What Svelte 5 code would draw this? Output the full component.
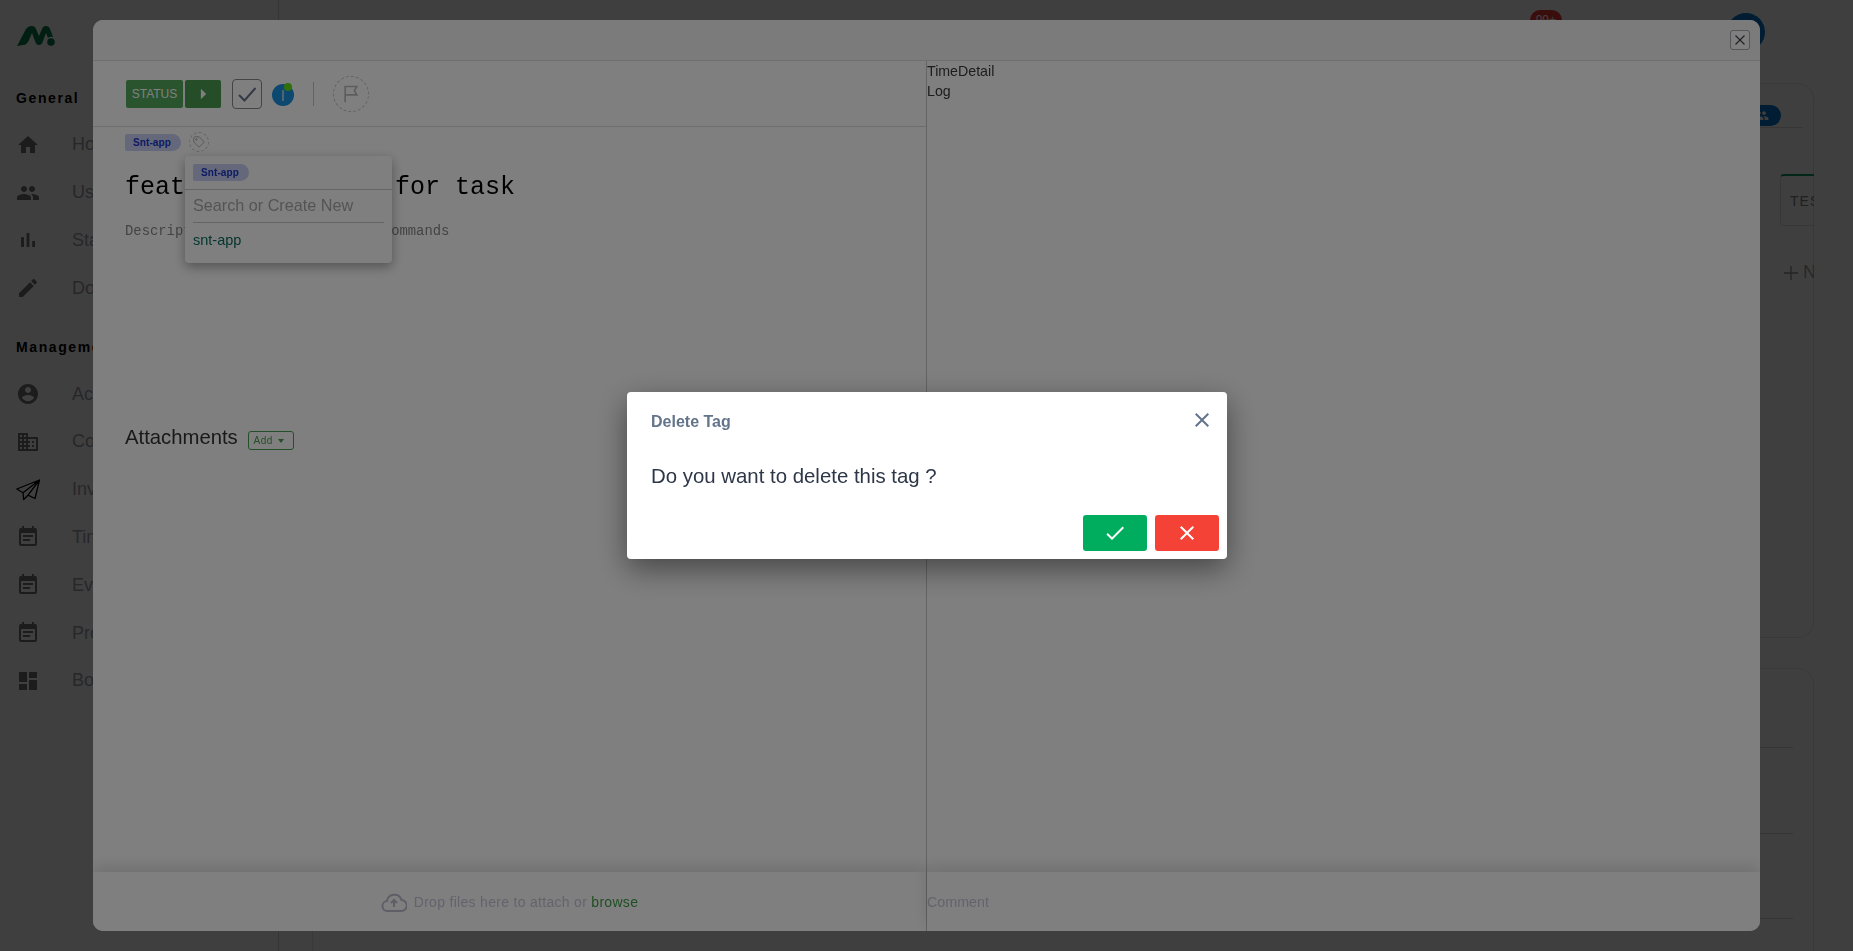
<script lang="ts">
	const general = [
		{ label: 'Home', d: 'M10 20v-6h4v6h5v-8h3L12 3 2 12h3v8z' },
		{ label: 'Users', d: 'M16 11c1.66 0 2.99-1.34 2.99-3S17.66 5 16 5c-1.66 0-3 1.34-3 3s1.34 3 3 3zm-8 0c1.66 0 2.99-1.34 2.99-3S9.66 5 8 5C6.34 5 5 6.34 5 8s1.34 3 3 3zm0 2c-2.33 0-7 1.17-7 3.5V19h14v-2.5c0-2.33-4.67-3.5-7-3.5zm8 0c-.29 0-.62.02-.97.05 1.16.84 1.97 1.97 1.97 3.45V19h6v-2.5c0-2.33-4.67-3.5-7-3.5z' },
		{ label: 'Stats', d: 'M5 9.2h3V19H5zM10.6 5h2.8v14h-2.8zm5.6 8H19v6h-2.8z' },
		{ label: 'Docs', d: 'M3 17.25V21h3.75L17.81 9.94l-3.75-3.75L3 17.25zM20.71 7.04c.39-.39.39-1.02 0-1.41l-2.34-2.34c-.39-.39-1.02-.39-1.41 0l-1.83 1.83 3.75 3.75 1.83-1.83z' }
	];
	const note = 'M17 10H7v2h10v-2zm2-7h-1V1h-2v2H8V1H6v2H5c-1.11 0-1.99.9-1.99 2L3 19c0 1.1.89 2 2 2h14c1.1 0 2-.9 2-2V5c0-1.1-.9-2-2-2zm0 16H5V8h14v11zm-5-5H7v2h7v-2z';
	const management = [
		{ label: 'Accounts', d: 'M12 2C6.48 2 2 6.48 2 12s4.48 10 10 10 10-4.48 10-10S17.52 2 12 2zm0 3c1.66 0 3 1.34 3 3s-1.34 3-3 3-3-1.34-3-3 1.34-3 3-3zm0 14.2c-2.5 0-4.71-1.28-6-3.22.03-1.99 4-3.08 6-3.08 1.99 0 5.97 1.09 6 3.08-1.29 1.94-3.5 3.22-6 3.22z' },
		{ label: 'Companies', d: 'M12 7V3H2v18h20V7H12zM6 19H4v-2h2v2zm0-4H4v-2h2v2zm0-4H4V9h2v2zm0-4H4V5h2v2zm4 12H8v-2h2v2zm0-4H8v-2h2v2zm0-4H8V9h2v2zm0-4H8V5h2v2zm10 12h-8v-2h2v-2h-2v-2h2v-2h-2V9h8v10zm-2-8h-2v2h2v-2zm0 4h-2v2h2v-2z' },
		{ label: 'Invoices', plane: true },
		{ label: 'Timesheets', d: note },
		{ label: 'Events', d: note },
		{ label: 'Projects', d: note },
		{ label: 'Boards', d: 'M3 13h8V3H3v10zm0 8h8v-6H3v6zm10 0h8V11h-8v10zm0-18v6h8V3h-8z' }
	];
	const peopleIcon = general[1].d;
</script>

{#snippet navItem(item)}
	<li>
		{#if item.plane}
			<svg class="nav-icon plane" viewBox="0 0 24 24" fill="none" stroke="#000" stroke-width="1.300" stroke-linejoin="round">
				<path d="M23.500 2 .8 11 7 14.800l.6 6.700 4.400-4.300 7 3.300zM23.500 2 7 14.800M23.500 2 12 17.200" />
			</svg>
		{:else}
			<svg class="nav-icon" viewBox="0 0 24 24"><path d={item.d} /></svg>
		{/if}
		<span>{item.label}</span>
	</li>
{/snippet}

<div class="page">
	<aside class="sidebar">
		<svg class="logo" viewBox="0 0 38 20">
			<path d="M0 20 9 3Q11 0 14 0h1q3 0 4 3l3 7 3-7q1-3 4-3t4 3l3 8q-3-1-5 1l-2-5-3 8q-1 4-4 4t-4-4l-3-8-3 7q-2 5-6 5z" fill="#07784a" />
			<circle cx="34" cy="16" r="3.800" fill="#07784a" />
		</svg>
		<h4 class="group first">General</h4>
		<ul>
			{#each general as item}
				{@render navItem(item)}
			{/each}
		</ul>
		<h4 class="group">Management</h4>
		<ul>
			{#each management as item}
				{@render navItem(item)}
			{/each}
		</ul>
	</aside>

	<main class="main">
		<div class="topbar">
			<span class="badge">99+</span>
			<span class="avatar"></span>
		</div>
		<section class="card board">
			<div class="board-head">
				<span class="pill-blue">
					<svg viewBox="0 0 24 24" width="15" height="15"><path d={peopleIcon} fill="#fff" /></svg>
				</span>
			</div>
			<div class="task-card">TEST</div>
			<div class="new-task">
				<svg viewBox="0 0 16 16" width="16" height="16" fill="none" stroke="#909090" stroke-width="1.300"><path d="M8 1v14M1 8h14" /></svg>
				<span>New</span>
			</div>
		</section>
		<section class="card list">
			<div class="row"></div>
			<div class="row"></div>
			<div class="row"></div>
		</section>
	</main>
</div>

<div class="backdrop"></div>

<div class="modal">
	<header class="modal-head">
		<button class="modal-close" aria-label="Close">
			<svg viewBox="0 0 12 12" width="12" height="12" fill="none" stroke="#3a3f4a" stroke-width="1.100"><path d="M1.500 1.500l9 9M10.500 1.500l-9 9" /></svg>
		</button>
	</header>
	<div class="modal-body">
		<div class="left">
			<div class="toolbar">
				<div class="status">
					<button class="status-btn">STATUS</button>
					<button class="status-next" aria-label="Next status">
						<svg viewBox="0 0 8 12" width="7" height="12"><path d="M1 0l6 6-6 6z" fill="#fff" /></svg>
					</button>
				</div>
				<button class="done" aria-label="Done">
					<svg viewBox="0 0 24 24" width="24" height="24" fill="none" stroke="#66758a" stroke-width="2"><path d="M4 13l5.500 5.500L20.500 6" /></svg>
				</button>
				<span class="assignee">
					<svg viewBox="0 0 22 23" width="22" height="23">
						<circle cx="11" cy="12" r="11" fill="#1a90e0" />
						<rect x="10" y="7" width="2" height="11" fill="#9ccbe8" />
						<circle cx="16" cy="4" r="4" fill="#60e010" />
					</svg>
				</span>
				<span class="sep"></span>
				<button class="flag" aria-label="Priority">
					<svg viewBox="0 0 24 24" width="20" height="20" fill="none" stroke="#bbb" stroke-width="2"><path d="M5 22V3h14l-3 5 3 5H5" /></svg>
				</button>
			</div>
			<div class="content">
				<div class="tags">
					<span class="tag">Snt-app</span>
					<span class="tag-add">
						<svg viewBox="0 0 16 16" width="14" height="14" fill="none" stroke="#aaa" stroke-width="1"><path d="M2 3.200 3.200 2h5L14 8l-6 6-6-6z" /><circle cx="5" cy="5" r="1" /></svg>
					</span>
					<div class="tag-menu">
						<div class="menu-selected"><span class="tag">Snt-app</span></div>
						<div class="menu-search">Search or Create New</div>
						<div class="menu-option">snt-app</div>
					</div>
				</div>
				<h1 class="title">feature: commands for task</h1>
				<p class="desc">Description: feature for tasks commands</p>
				<div class="attachments">
					<h2>Attachments</h2>
					<button class="add">Add <i class="caret"></i></button>
				</div>
			</div>
			<footer class="foot drop">
				<svg viewBox="0 0 26 22" width="26" height="22" fill="none" stroke="#bdbdd0" stroke-width="2">
					<path d="M7 20a5 5 0 0 1-1-10 7.500 7.500 0 0 1 14.500-1A5.500 5.500 0 0 1 20 20z" />
					<path d="M13 16v-6M10 12l3-3 3 3" />
				</svg>
				<span>Drop files here to attach or <b>browse</b></span>
			</footer>
		</div>
		<div class="right">
			<div class="time-tabs">
				<div><span>Time</span><span>Detail</span></div>
				<div>Log</div>
			</div>
			<footer class="foot comment">Comment</footer>
		</div>
	</div>
</div>

<div class="backdrop top"></div>

<div class="dialog">
	<div class="dialog-head">
		<h3>Delete Tag</h3>
		<button class="dialog-close" aria-label="Close">
			<svg viewBox="0 0 24 24" width="24" height="24"><path d="M19 6.410 17.590 5 12 10.590 6.410 5 5 6.410 10.590 12 5 17.590 6.410 19 12 13.410 17.590 19 19 17.590 13.410 12z" fill="#64748b" /></svg>
		</button>
	</div>
	<p class="dialog-text">Do you want to delete this tag ?</p>
	<div class="dialog-actions">
		<button class="yes" aria-label="Yes">
			<svg viewBox="0 0 24 24" width="24" height="24"><path d="M9 16.170 4.830 12l-1.420 1.410L9 19 21 7l-1.410-1.410z" fill="#fff" /></svg>
		</button>
		<button class="no" aria-label="No">
			<svg viewBox="0 0 24 24" width="24" height="24"><path d="M19 6.410 17.590 5 12 10.590 6.410 5 5 6.410 10.590 12 5 17.590 6.410 19 12 13.410 17.590 19 19 17.590 13.410 12z" fill="#fff" /></svg>
		</button>
	</div>
</div>

<style>
	:global(body) {
		background: #fff;
		overflow: hidden;
		font-family: 'Liberation Sans', Arial, sans-serif;
	}

	button {
		font-family: inherit;
		padding: 0;
		cursor: pointer;
	}

	.page {
		display: flex;
		height: 951px;
		overflow: hidden;
	}

	.sidebar {
		width: 279px;
		flex-shrink: 0;
		box-sizing: border-box;
		padding: 26px 0 0 16px;
		border-right: 1px solid #d5d5d5;
	}

	.logo {
		display: block;
		width: 38px;
		height: 20px;
		margin-left: 1px;
	}

	.group {
		margin: 0;
		font-size: 14px;
		line-height: 20px;
		font-weight: 700;
		letter-spacing: 1.600px;
		color: #000;
		padding-top: 25px;
	}

	.group.first {
		padding-top: 42px;
	}

	.sidebar ul {
		list-style: none;
		margin: 13px 0 0;
		padding: 0;
	}

	.sidebar li {
		display: flex;
		align-items: center;
		height: 47.800px;
		font-size: 18px;
		color: #9c9ea8;
	}

	.nav-icon {
		width: 24px;
		height: 24px;
		margin-right: 32px;
		fill: #707070;
	}

	.nav-icon.plane {
		fill: none;
	}

	.main {
		flex: 1;
		min-width: 0;
		display: flex;
		flex-direction: column;
		padding-left: 33px;
		padding-right: 39px;
		position: relative;
	}

	.topbar {
		height: 83px;
		display: flex;
		justify-content: flex-end;
		align-items: flex-start;
		flex-shrink: 0;
	}

	.badge {
		background: #e53935;
		color: #fff;
		font-size: 12px;
		line-height: 20px;
		padding: 0 6px;
		border-radius: 10px;
		margin: 10px 165px 0 0;
	}

	.avatar {
		width: 38px;
		height: 38px;
		border-radius: 50%;
		background: #0077cc;
		margin: 13px 49px 0 0;
	}

	.card {
		border: 1px solid #e4e4e4;
		border-radius: 16px;
		box-sizing: border-box;
	}

	.board {
		height: 555px;
		padding: 21px 10px 0 20px;
		flex-shrink: 0;
	}

	.board-head {
		display: flex;
		justify-content: flex-end;
		border-bottom: 1px solid #d8d8d8;
		height: 22px;
	}

	.pill-blue {
		width: 60px;
		height: 21px;
		border-radius: 11px;
		background: #0077cc;
		margin-right: 22px;
		display: flex;
		align-items: center;
		justify-content: flex-end;
		padding-right: 12px;
		box-sizing: border-box;
	}

	.task-card {
		margin: 46px -11px 0 auto;
		width: 34px;
		height: 52px;
		border: 1px solid #ddd;
		border-top: 2px solid #0a9a5c;
		border-right: 0;
		border-radius: 4px 0 0 4px;
		box-sizing: border-box;
		font-size: 14px;
		letter-spacing: 1px;
		line-height: 50px;
		padding-left: 9px;
		color: #808080;
		overflow: hidden;
		white-space: nowrap;
	}

	.new-task {
		margin: 36px -11px 0 auto;
		width: 34px;
		box-sizing: border-box;
		padding-left: 3px;
		overflow: hidden;
		white-space: nowrap;
		font-size: 18px;
		color: #a0a0a0;
		display: flex;
		align-items: center;
		gap: 4px;
	}

	.new-task svg {
		flex-shrink: 0;
	}

	.list {
		margin-top: 30px;
		height: 320px;
		padding: 78px 20px 0 20px;
		flex-shrink: 0;
	}

	.row {
		height: 85.500px;
		box-sizing: border-box;
		border-top: 1px solid #d5d5d5;
	}

	.backdrop {
		position: fixed;
		inset: 0;
		background: rgba(0, 0, 0, 0.5);
	}

	.modal {
		position: fixed;
		left: 93px;
		top: 20px;
		width: 1667px;
		height: 911px;
		background: #fff;
		border-radius: 10px;
		display: flex;
		flex-direction: column;
		overflow: hidden;
	}

	.modal-head {
		height: 41px;
		flex-shrink: 0;
		box-sizing: border-box;
		background: #f7f7f8;
		border-bottom: 1px solid #dcdcdc;
		display: flex;
		align-items: center;
		justify-content: flex-end;
		padding-right: 10px;
	}

	.modal-close {
		width: 20px;
		height: 20px;
		display: flex;
		align-items: center;
		justify-content: center;
		background: #fff;
		border: 1px solid #aaa;
		border-radius: 3px;
	}

	.modal-body {
		flex: 1;
		min-height: 0;
		display: grid;
		grid-template-columns: 833px 834px;
	}

	.left,
	.right {
		display: flex;
		flex-direction: column;
		min-height: 0;
	}

	.right {
		border-left: 1px solid #c8c8c8;
		font-size: 14.200px;
		color: #3b3b3b;
		box-sizing: border-box;
	}

	.time-tabs {
		flex: 1;
		line-height: 20px;
	}

	.toolbar {
		height: 66px;
		flex-shrink: 0;
		box-sizing: border-box;
		border-bottom: 1px solid #dcdcdc;
		display: flex;
		align-items: center;
		padding-left: 33px;
	}

	.status {
		display: flex;
		gap: 2px;
	}

	.status button {
		height: 28px;
		border: 0;
		color: #fff;
		border-radius: 2px;
	}

	.status-btn {
		width: 57px;
		background: #52a85a;
		font-size: 12px;
	}

	.status-next {
		width: 36px;
		background: #4a9a50;
		display: flex;
		align-items: center;
		justify-content: center;
	}

	.done {
		width: 30px;
		height: 30px;
		margin-left: 11px;
		display: flex;
		align-items: center;
		justify-content: center;
		background: transparent;
		border: 1px solid #888;
		border-radius: 4px;
	}

	.assignee {
		margin: 2px 0 0 10px;
		display: flex;
	}

	.sep {
		width: 1px;
		height: 24px;
		background: #c4c4c4;
		margin-left: 19px;
	}

	.flag {
		width: 36px;
		height: 36px;
		margin-left: 19px;
		display: flex;
		align-items: center;
		justify-content: center;
		background: transparent;
		border: 1px dashed #c4c4c4;
		border-radius: 50%;
	}

	.content {
		flex: 1;
		min-height: 0;
		padding: 5px 32px 0;
	}

	.tags {
		display: flex;
		align-items: center;
		gap: 8px;
		position: relative;
		height: 20px;
	}

	.tag {
		display: inline-block;
		width: 56px;
		box-sizing: border-box;
		height: 17px;
		line-height: 17px;
		padding-left: 8px;
		background: #c8d0f4;
		color: #1a36c8;
		font-size: 10px;
		font-weight: 700;
		letter-spacing: 0.100px;
		border-radius: 2px 9px 9px 2px;
	}

	.tag-add {
		width: 20px;
		height: 20px;
		box-sizing: border-box;
		display: flex;
		align-items: center;
		justify-content: center;
		border: 1px dashed #c4c4c4;
		border-radius: 50%;
	}

	.tag-menu {
		position: absolute;
		left: 60px;
		top: 24px;
		width: 207px;
		height: 107px;
		background: #fff;
		border-radius: 4px;
		box-shadow: 0 4px 12px rgba(0, 0, 0, 0.35);
		z-index: 2;
	}

	.menu-selected {
		height: 34px;
		box-sizing: border-box;
		padding: 8px 8px 0;
		border-bottom: 1px solid #c8c8c8;
	}

	.menu-selected .tag {
		display: block;
	}

	.menu-search {
		margin: 0 8px;
		height: 33px;
		line-height: 30px;
		box-sizing: border-box;
		border-bottom: 1px solid #c8c8c8;
		font-size: 16.200px;
		color: #a8a8a8;
	}

	.menu-option {
		margin: 7px 8px 0;
		font-size: 14.500px;
		line-height: 20px;
		color: #0c6c60;
	}

	.title {
		margin: 19px 0 0;
		font-family: 'Liberation Mono', monospace;
		font-size: 25px;
		font-weight: 400;
		line-height: 34px;
		color: #000;
	}

	.desc {
		margin: 16px 0 0;
		font-family: 'Liberation Mono', monospace;
		font-size: 13.860px;
		line-height: 20px;
		color: #888;
	}

	.attachments {
		margin-top: 182px;
		display: flex;
		align-items: center;
		gap: 10px;
	}

	.attachments h2 {
		margin: 0;
		font-size: 20.300px;
		font-weight: 400;
		line-height: 28px;
		color: #333;
	}

	.add {
		width: 46px;
		height: 19px;
		margin-top: 7px;
		box-sizing: border-box;
		padding-right: 4px;
		background: transparent;
		border: 1px solid #4a9f50;
		border-radius: 3px;
		color: #4a9f50;
		font-size: 10px;
		font-weight: 400;
		letter-spacing: 0.500px;
		display: flex;
		align-items: center;
		justify-content: center;
		gap: 5px;
	}

	.caret {
		width: 0;
		height: 0;
		border: 3px solid transparent;
		border-top: 4px solid #4a9f50;
		border-bottom: 0;
	}

	.foot {
		height: 59px;
		flex-shrink: 0;
		background: #fff;
		box-shadow: 0 -6px 14px rgba(0, 0, 0, 0.12);
		font-size: 14.300px;
		color: #c6c6d8;
		display: flex;
		align-items: center;
		position: relative;
	}

	.drop {
		justify-content: center;
		gap: 7px;
		font-size: 14px;
		letter-spacing: 0.300px;
	}

	.drop b {
		font-weight: 400;
		color: #3f9f45;
	}

	.dialog {
		position: fixed;
		left: 627px;
		top: 392px;
		width: 600px;
		height: 167px;
		background: #fff;
		border-radius: 4px;
		box-shadow: 0 10px 30px rgba(0, 0, 0, 0.45);
		display: flex;
		flex-direction: column;
		color: #2d3748;
	}

	.dialog-head {
		height: 60px;
		flex-shrink: 0;
		display: flex;
		align-items: center;
		justify-content: space-between;
		padding: 0 13px 0 24px;
	}

	.dialog-head h3 {
		margin: 0;
		font-size: 16px;
		font-weight: 700;
		color: #64748b;
	}

	.dialog-close {
		background: none;
		border: 0;
		width: 24px;
		height: 24px;
		margin-top: -4px;
	}

	.dialog-text {
		margin: 12px 0 0 24px;
		font-size: 20.400px;
		line-height: 24px;
	}

	.dialog-actions {
		margin-top: auto;
		display: flex;
		justify-content: flex-end;
		gap: 8px;
		padding: 0 8px 8px 0;
	}

	.dialog-actions button {
		width: 64px;
		height: 36px;
		border: 0;
		border-radius: 3px;
		display: flex;
		align-items: center;
		justify-content: center;
	}

	.yes {
		background: #00ad5f;
	}

	.no {
		background: #f44336;
	}
</style>
